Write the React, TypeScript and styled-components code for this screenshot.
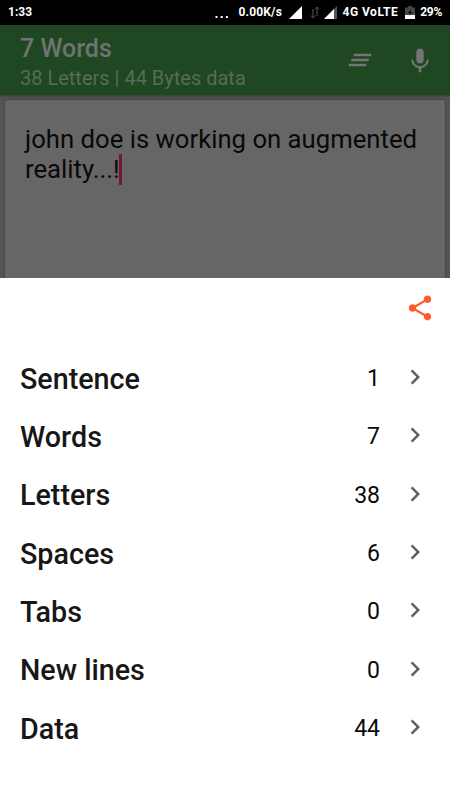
import React from 'react';
import styled, { createGlobalStyle } from 'styled-components';
import { MdChevronRight, MdClearAll, MdMic, MdShare } from 'react-icons/md';

const GlobalStyle = createGlobalStyle`
  * { box-sizing: border-box; }
  body { margin: 0; background: #fff; font-family: Roboto, sans-serif; }
  svg { display: block; flex: none; }
`;

const Screen = styled.div`
  width: 450px;
  height: 800px;
  display: flex;
  flex-direction: column;
  overflow: hidden;
  background: #545454;
`;

const StatusBar = styled.div`
  height: 25px;
  flex: none;
  display: flex;
  align-items: center;
  padding: 0 8px;
  background: #000;
  color: #fff;
  font-size: 12px;
  font-weight: 700;
  line-height: 25px;
  white-space: pre;
`;

const StatusText = styled.span<{ $left?: number; $spacing?: number }>`
  margin-left: ${(p) => p.$left ?? 0}px;
  letter-spacing: ${(p) => p.$spacing ?? 0}px;
`;

const StatusIcon = styled.svg<{ $left: number }>`
  margin-left: ${(p) => p.$left}px;
`;

const Spring = styled.div`
  flex: 1;
`;

const Header = styled.header`
  height: 70px;
  flex: none;
  display: flex;
  padding: 0 15px 0 20px;
  background: #1f4721;
  color: #707370;
  box-shadow: 0 1px 3px rgba(0, 0, 0, 0.35);
  z-index: 1;
`;

const Titles = styled.div`
  flex: 1;
  padding-top: 9px;
  white-space: nowrap;
`;

const Title = styled.div`
  font-size: 25px;
  font-weight: 500;
  line-height: 29px;
`;

const Subtitle = styled.div`
  font-size: 20px;
  line-height: 30px;
  color: #566d57;
`;

const Actions = styled.div`
  display: flex;
  gap: 30px;
  padding-top: 20px;
  color: #757575;

  svg:last-child { margin-top: 1px; }
`;

const Editor = styled.main`
  height: 183px;
  flex: none;
  padding: 5px 5px 0;
`;

const Paper = styled.div`
  height: 178px;
  padding: 23px 20px 0;
  background: #666;
  border-radius: 2px 2px 0 0;
  box-shadow: 0 0 2px rgba(0, 0, 0, 0.5);
  color: #090909;
  font-size: 25.7px;
  line-height: 32px;
`;

const TextLine = styled.div`
  display: flex;
  height: 30px;
  white-space: nowrap;
`;

const Caret = styled.span`
  width: 3px;
  height: 31px;
  margin: 1px 0 0 -1px;
  background: #751638;
`;

const Sheet = styled.section`
  flex: 1;
  display: flex;
  flex-direction: column;
  background: #fff;
`;

const SheetActions = styled.div`
  height: 71.4px;
  display: flex;
  justify-content: flex-end;
  padding: 15px 15px 0 0;
  color: #ff5a2c;
`;

const Row = styled.div`
  height: 58.35px;
  display: flex;
  align-items: center;
  padding: 0 20px;
`;

const Label = styled.span`
  flex: 1;
  font-size: 28.7px;
  font-weight: 500;
  color: #171717;
`;

const Count = styled.span`
  font-size: 23px;
  color: #090909;
`;

const Chevron = styled(MdChevronRight)`
  margin: -3px 0 0 20px;
  color: #606060;
`;

const stats: [string, number][] = [
  ['Sentence', 1],
  ['Words', 7],
  ['Letters', 38],
  ['Spaces', 6],
  ['Tabs', 0],
  ['New lines', 0],
  ['Data', 44],
];

export default function App() {
  return (
    <Screen>
      <GlobalStyle />
      <StatusBar>
        <StatusText>1:33</StatusText>
        <Spring />
        <StatusIcon $left={0} width="14" height="25" viewBox="0 0 14 25" fill="#fff">
          <path d="M.5 16h2v2h-2zM5.7 16h2v2h-2zM10.9 16h2v2h-2z" />
        </StatusIcon>
        <StatusText $left={10} $spacing={0.15}>0.00K/s</StatusText>
        <StatusIcon $left={6.5} width="13" height="25" viewBox="0 0 13 25">
          <path d="M13 6V19H0z" fill="#fff" />
        </StatusIcon>
        <StatusIcon $left={8.5} width="10" height="25" viewBox="0 0 10 25" fill="none" stroke="#555" strokeWidth="1">
          <path d="M3 9v9M1 15.5l2 2.5 2-2.5M7 16V7M5 9.5L7 7l2 2.5" />
        </StatusIcon>
        <StatusIcon $left={3.5} width="13" height="25" viewBox="0 0 13 25">
          <path d="M13 6V19H0z" fill="#555" />
          <path d="M10 9v10H0z" fill="#fff" />
        </StatusIcon>
        <StatusText $left={6} $spacing={0.5}>4G VoLTE</StatusText>
        <StatusIcon $left={7} width="10" height="25" viewBox="0 0 10 25">
          <path d="M3 6h4v1.5h3V19H0V7.500h3z" fill="#444" />
          <path d="M0 15h10v4H0z" fill="#fff" />
          <path d="M6 9L3 13h2l-1 3 3-4H5z" fill="#000" />
        </StatusIcon>
        <StatusText $left={5} $spacing={-0.3}>29%</StatusText>
      </StatusBar>
      <Header>
        <Titles>
          <Title>7 Words</Title>
          <Subtitle>38 Letters | 44 Bytes data</Subtitle>
        </Titles>
        <Actions>
          <MdClearAll size={30} />
          <MdMic size={30} />
        </Actions>
      </Header>
      <Editor>
        <Paper>
          <TextLine>john doe is working on augmented</TextLine>
          <TextLine>
            reality...!
            <Caret />
          </TextLine>
        </Paper>
      </Editor>
      <Sheet>
        <SheetActions>
          <MdShare size={30} />
        </SheetActions>
        {stats.map(([label, count]) => (
          <Row key={label}>
            <Label>{label}</Label>
            <Count>{count}</Count>
            <Chevron size={30} />
          </Row>
        ))}
      </Sheet>
    </Screen>
  );
}
